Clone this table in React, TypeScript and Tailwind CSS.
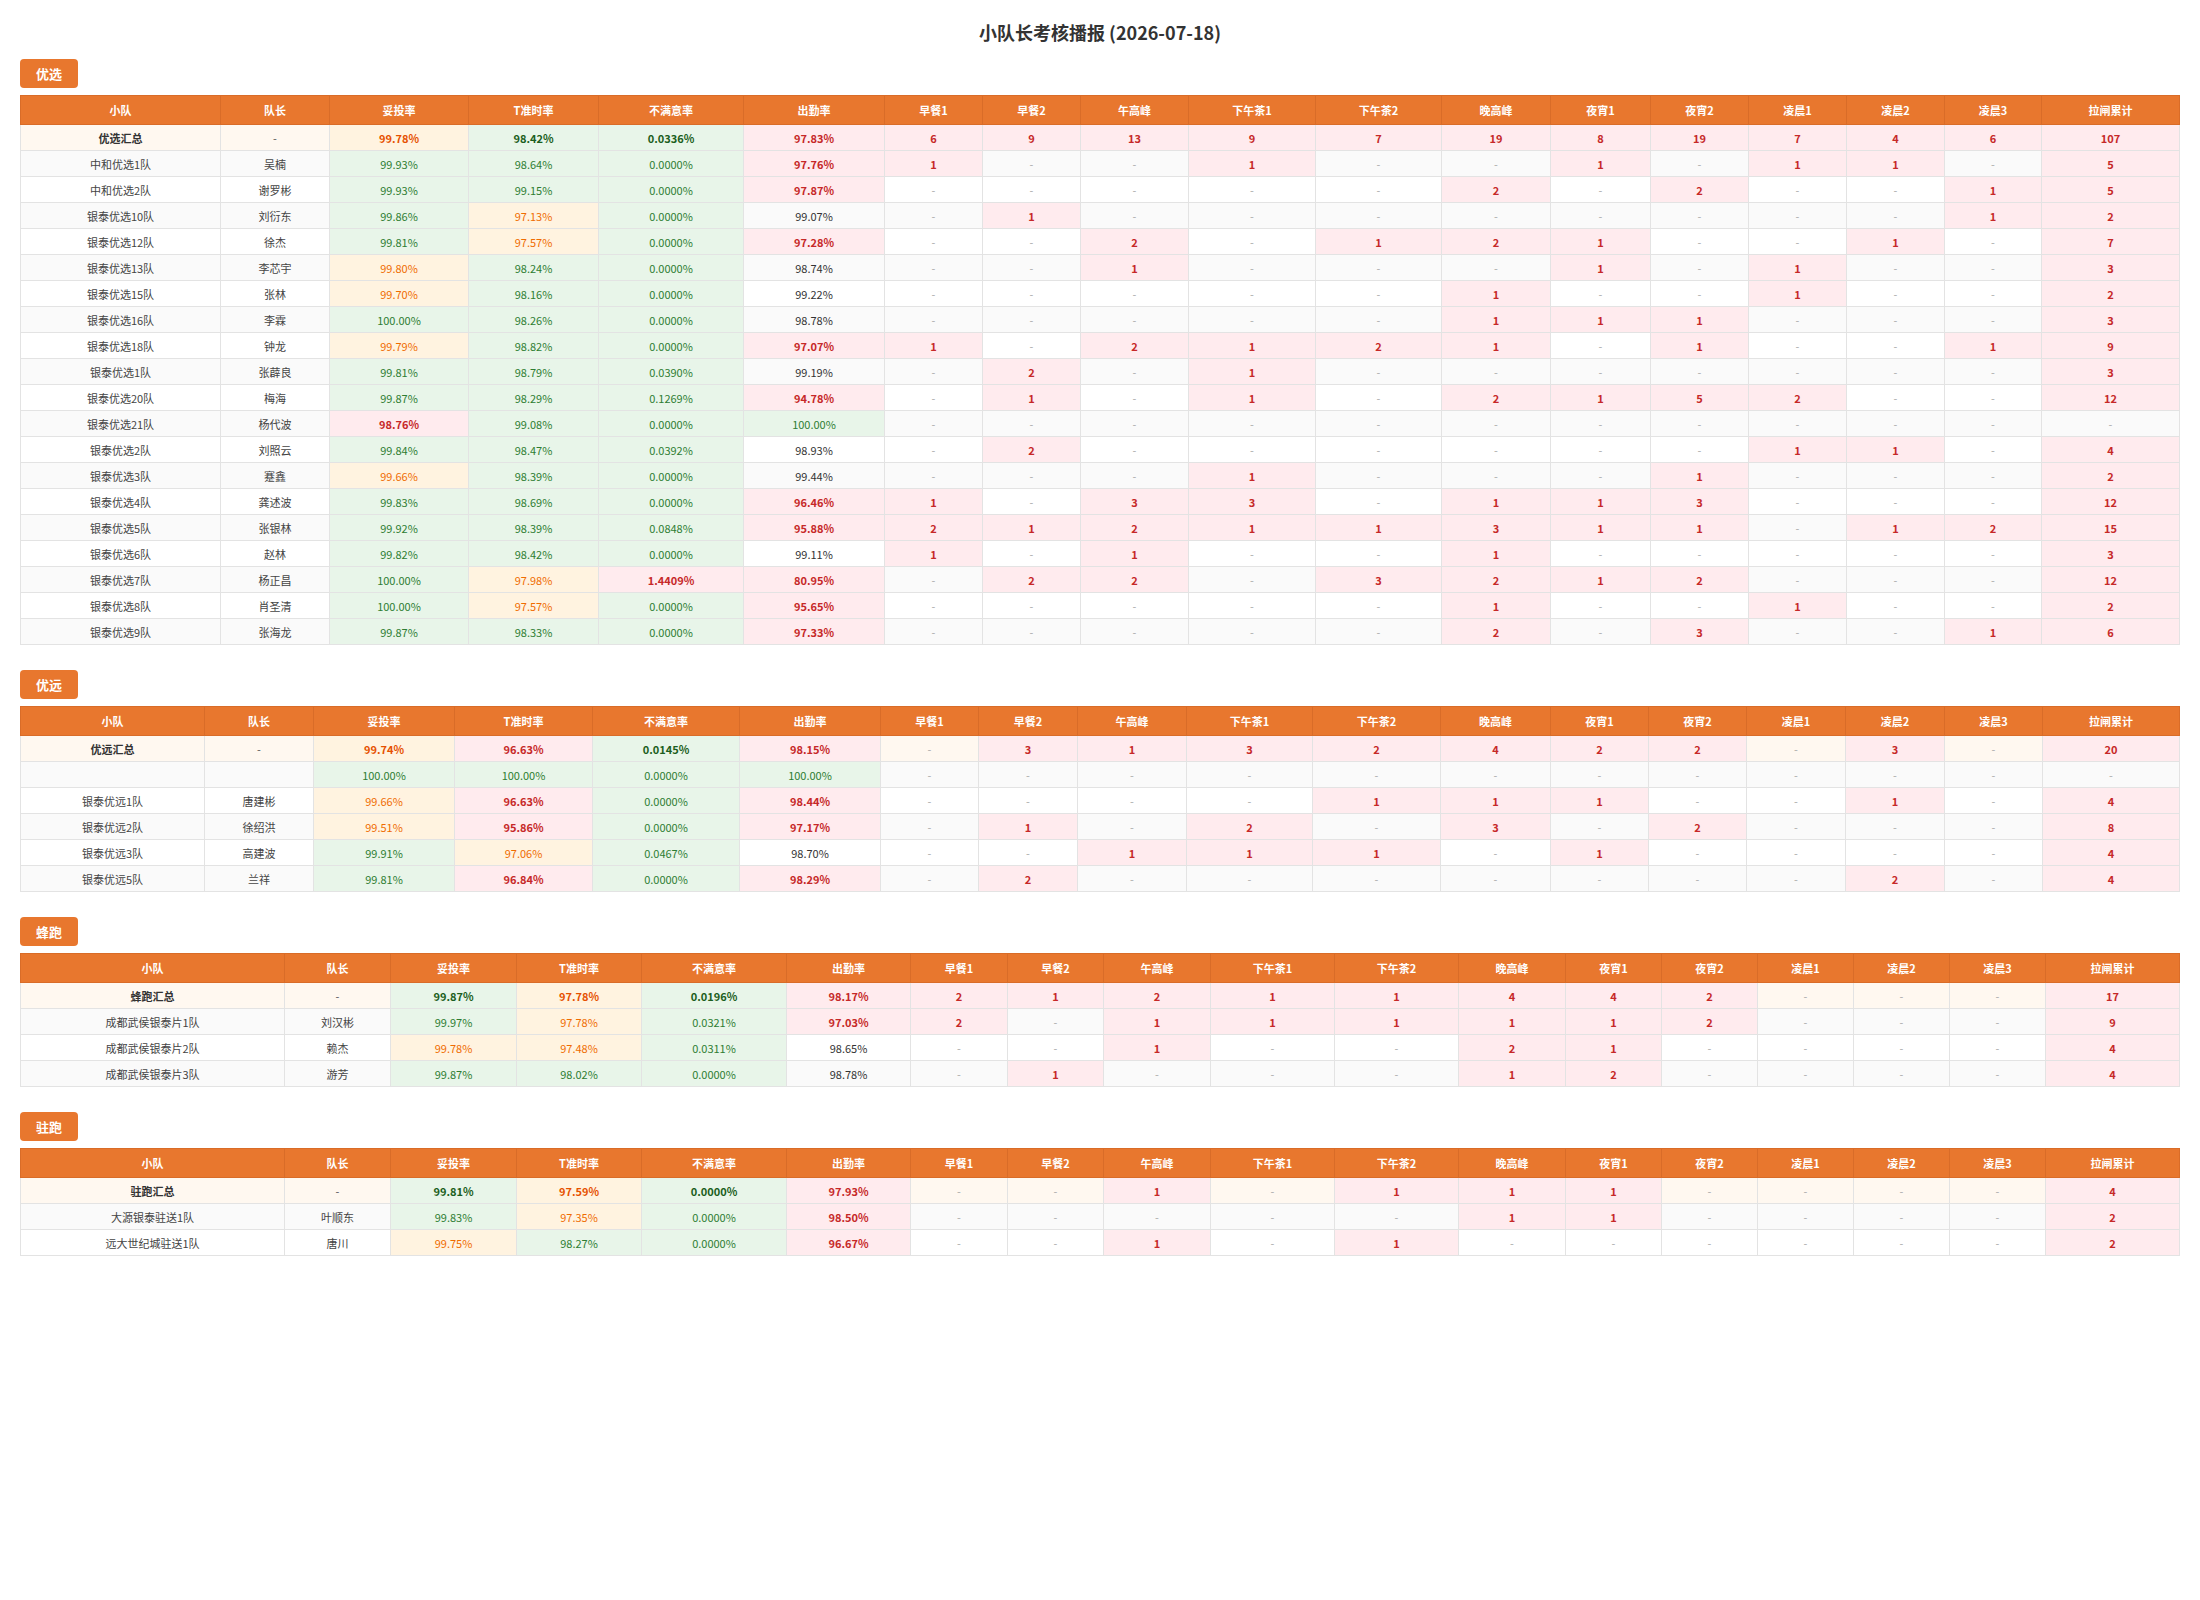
import React from "react"

type Row = [string, string, string, string, string, string, number[], number]

type Section = {
  title: string
  cols: string[]
  summary: Row
  rows: Row[]
}

const headers = [
  "小队",
  "队长",
  "妥投率",
  "T准时率",
  "不满意率",
  "出勤率",
  "早餐1",
  "早餐2",
  "午高峰",
  "下午茶1",
  "下午茶2",
  "晚高峰",
  "夜宵1",
  "夜宵2",
  "凌晨1",
  "凌晨2",
  "凌晨3",
  "拉闸累计",
]

const colsYouxuan = [
  "w-[200px]", "w-[109px]", "w-[139px]", "w-[130px]", "w-[145px]", "w-[141px]",
  "w-[98px]", "w-[98px]", "w-[108px]", "w-[127px]", "w-[126px]", "w-[109px]",
  "w-[100px]", "w-[98px]", "w-[98px]", "w-[98px]", "w-[97px]", "w-[138px]",
]

const colsYouyuan = [
  "w-[184px]", "w-[109px]", "w-[141px]", "w-[138px]", "w-[147px]", "w-[141px]",
  "w-[98px]", "w-[99px]", "w-[109px]", "w-[126px]", "w-[128px]", "w-[110px]",
  "w-[98px]", "w-[98px]", "w-[99px]", "w-[99px]", "w-[98px]", "w-[137px]",
]

const colsPao = [
  "w-[264px]", "w-[106px]", "w-[126px]", "w-[125px]", "w-[145px]", "w-[124px]",
  "w-[97px]", "w-[96px]", "w-[107px]", "w-[124px]", "w-[124px]", "w-[107px]",
  "w-[96px]", "w-[96px]", "w-[96px]", "w-[96px]", "w-[96px]", "w-[134px]",
]

const none = [0, 0, 0, 0, 0, 0, 0, 0, 0, 0, 0]

const sections: Section[] = [
  {
    title: "优选",
    cols: colsYouxuan,
    summary: ["优选汇总", "-", "99.78", "98.42", "0.0336", "97.83", [6, 9, 13, 9, 7, 19, 8, 19, 7, 4, 6], 107],
    rows: [
      ["中和优选1队", "吴楠", "99.93", "98.64", "0.0000", "97.76", [1, 0, 0, 1, 0, 0, 1, 0, 1, 1, 0], 5],
      ["中和优选2队", "谢罗彬", "99.93", "99.15", "0.0000", "97.87", [0, 0, 0, 0, 0, 2, 0, 2, 0, 0, 1], 5],
      ["银泰优选10队", "刘衍东", "99.86", "97.13", "0.0000", "99.07", [0, 1, 0, 0, 0, 0, 0, 0, 0, 0, 1], 2],
      ["银泰优选12队", "徐杰", "99.81", "97.57", "0.0000", "97.28", [0, 0, 2, 0, 1, 2, 1, 0, 0, 1, 0], 7],
      ["银泰优选13队", "李芯宇", "99.80", "98.24", "0.0000", "98.74", [0, 0, 1, 0, 0, 0, 1, 0, 1, 0, 0], 3],
      ["银泰优选15队", "张林", "99.70", "98.16", "0.0000", "99.22", [0, 0, 0, 0, 0, 1, 0, 0, 1, 0, 0], 2],
      ["银泰优选16队", "李霖", "100.00", "98.26", "0.0000", "98.78", [0, 0, 0, 0, 0, 1, 1, 1, 0, 0, 0], 3],
      ["银泰优选18队", "钟龙", "99.79", "98.82", "0.0000", "97.07", [1, 0, 2, 1, 2, 1, 0, 1, 0, 0, 1], 9],
      ["银泰优选1队", "张薜良", "99.81", "98.79", "0.0390", "99.19", [0, 2, 0, 1, 0, 0, 0, 0, 0, 0, 0], 3],
      ["银泰优选20队", "梅海", "99.87", "98.29", "0.1269", "94.78", [0, 1, 0, 1, 0, 2, 1, 5, 2, 0, 0], 12],
      ["银泰优选21队", "杨代波", "98.76", "99.08", "0.0000", "100.00", none, 0],
      ["银泰优选2队", "刘照云", "99.84", "98.47", "0.0392", "98.93", [0, 2, 0, 0, 0, 0, 0, 0, 1, 1, 0], 4],
      ["银泰优选3队", "蹇鑫", "99.66", "98.39", "0.0000", "99.44", [0, 0, 0, 1, 0, 0, 0, 1, 0, 0, 0], 2],
      ["银泰优选4队", "龚述波", "99.83", "98.69", "0.0000", "96.46", [1, 0, 3, 3, 0, 1, 1, 3, 0, 0, 0], 12],
      ["银泰优选5队", "张银林", "99.92", "98.39", "0.0848", "95.88", [2, 1, 2, 1, 1, 3, 1, 1, 0, 1, 2], 15],
      ["银泰优选6队", "赵林", "99.82", "98.42", "0.0000", "99.11", [1, 0, 1, 0, 0, 1, 0, 0, 0, 0, 0], 3],
      ["银泰优选7队", "杨正昌", "100.00", "97.98", "1.4409", "80.95", [0, 2, 2, 0, 3, 2, 1, 2, 0, 0, 0], 12],
      ["银泰优选8队", "肖圣清", "100.00", "97.57", "0.0000", "95.65", [0, 0, 0, 0, 0, 1, 0, 0, 1, 0, 0], 2],
      ["银泰优选9队", "张海龙", "99.87", "98.33", "0.0000", "97.33", [0, 0, 0, 0, 0, 2, 0, 3, 0, 0, 1], 6],
    ],
  },
  {
    title: "优远",
    cols: colsYouyuan,
    summary: ["优远汇总", "-", "99.74", "96.63", "0.0145", "98.15", [0, 3, 1, 3, 2, 4, 2, 2, 0, 3, 0], 20],
    rows: [
      ["", "", "100.00", "100.00", "0.0000", "100.00", none, 0],
      ["银泰优远1队", "唐建彬", "99.66", "96.63", "0.0000", "98.44", [0, 0, 0, 0, 1, 1, 1, 0, 0, 1, 0], 4],
      ["银泰优远2队", "徐绍洪", "99.51", "95.86", "0.0000", "97.17", [0, 1, 0, 2, 0, 3, 0, 2, 0, 0, 0], 8],
      ["银泰优远3队", "高建波", "99.91", "97.06", "0.0467", "98.70", [0, 0, 1, 1, 1, 0, 1, 0, 0, 0, 0], 4],
      ["银泰优远5队", "兰祥", "99.81", "96.84", "0.0000", "98.29", [0, 2, 0, 0, 0, 0, 0, 0, 0, 2, 0], 4],
    ],
  },
  {
    title: "蜂跑",
    cols: colsPao,
    summary: ["蜂跑汇总", "-", "99.87", "97.78", "0.0196", "98.17", [2, 1, 2, 1, 1, 4, 4, 2, 0, 0, 0], 17],
    rows: [
      ["成都武侯银泰片1队", "刘汉彬", "99.97", "97.78", "0.0321", "97.03", [2, 0, 1, 1, 1, 1, 1, 2, 0, 0, 0], 9],
      ["成都武侯银泰片2队", "赖杰", "99.78", "97.48", "0.0311", "98.65", [0, 0, 1, 0, 0, 2, 1, 0, 0, 0, 0], 4],
      ["成都武侯银泰片3队", "游芳", "99.87", "98.02", "0.0000", "98.78", [0, 1, 0, 0, 0, 1, 2, 0, 0, 0, 0], 4],
    ],
  },
  {
    title: "驻跑",
    cols: colsPao,
    summary: ["驻跑汇总", "-", "99.81", "97.59", "0.0000", "97.93", [0, 0, 1, 0, 1, 1, 1, 0, 0, 0, 0], 4],
    rows: [
      ["大源银泰驻送1队", "叶顺东", "99.83", "97.35", "0.0000", "98.50", [0, 0, 0, 0, 0, 1, 1, 0, 0, 0, 0], 2],
      ["远大世纪城驻送1队", "唐川", "99.75", "98.27", "0.0000", "96.67", [0, 0, 1, 0, 1, 0, 0, 0, 0, 0, 0], 2],
    ],
  },
]

type Tone = "g" | "o" | "r" | "n"

const deliveryTone = (v: number): Tone => (v > 99.8 ? "g" : v >= 99 ? "o" : "r")
const ontimeTone = (v: number): Tone => (v >= 98 ? "g" : v >= 97 ? "o" : "r")
const complaintTone = (v: number): Tone => (v < 1 ? "g" : "r")
const attendanceTone = (v: number): Tone => (v >= 100 ? "g" : v <= 98.5 ? "r" : "n")

const rowTone: Record<Tone, string> = {
  g: "bg-[#e8f5e9] text-[#2e7d32]",
  o: "bg-[#fff3e0] text-[#ef6c00]",
  r: "bg-[#ffebee] text-[#c62828] font-bold",
  n: "text-[#333]",
}

const sumTone: Record<Tone, string> = {
  g: "bg-[#e8f5e9] text-[#1b5e20] font-bold",
  o: "bg-[#fff3e0] text-[#e65100] font-bold",
  r: "bg-[#ffebee] text-[#c62828] font-bold",
  n: "text-[#333] font-bold",
}

const cell = "h-[26px] border border-[#e3e3e3] px-1 py-0 text-center align-middle"

function DataRow({ row, summary, striped }: { row: Row; summary?: boolean; striped?: boolean }) {
  const [name, leader, delivery, ontime, complaint, attendance, counts, total] = row
  const tones = summary ? sumTone : rowTone
  const base = summary ? "bg-[#fff8f0]" : striped ? "bg-[#fafafa]" : "bg-white"
  const rates: [string, Tone][] = [
    [delivery, deliveryTone(parseFloat(delivery))],
    [ontime, ontimeTone(parseFloat(ontime))],
    [complaint, complaintTone(parseFloat(complaint))],
    [attendance, attendanceTone(parseFloat(attendance))],
  ]

  const count = (n: number, key: string) =>
    n > 0 ? (
      <td key={key} className={`${cell} bg-[#ffebee] font-bold text-[#c62828]`}>
        {n}
      </td>
    ) : (
      <td key={key} className={`${cell} text-[#aaa]`}>
        -
      </td>
    )

  return (
    <tr className={base}>
      <td className={`${cell} ${summary ? "font-bold text-[#333]" : "text-[#444]"}`}>{name}</td>
      <td className={`${cell} ${summary ? "text-[#555]" : "text-[#444]"}`}>{leader}</td>
      {rates.map(([value, tone], i) => (
        <td key={i} className={`${cell} ${tones[tone]}`}>
          {value}%
        </td>
      ))}
      {counts.map((n, i) => count(n, `c${i}`))}
      {count(total, "total")}
    </tr>
  )
}

function ReportTable({ section }: { section: Section }) {
  return (
    <section className="flex flex-col">
      <div className="mb-[7px] flex h-[29px] w-fit items-center rounded-[4px] bg-[#e8772e] px-4 text-[13px] font-bold text-white">
        {section.title}
      </div>
      <table className="w-full table-fixed border-collapse border border-[#e3e3e3] text-[11px] leading-[14px]">
        <colgroup>
          {section.cols.map((w, i) => (
            <col key={i} className={w} />
          ))}
        </colgroup>
        <thead>
          <tr>
            {headers.map((h) => (
              <th
                key={h}
                className="h-[29px] border border-[#d96c28] bg-[#e8772e] px-1 py-0 text-center align-middle font-bold text-white"
              >
                {h}
              </th>
            ))}
          </tr>
        </thead>
        <tbody>
          <DataRow row={section.summary} summary />
          {section.rows.map((row, i) => (
            <DataRow key={i} row={row} striped={i % 2 === 0} />
          ))}
        </tbody>
      </table>
    </section>
  )
}

export default function App() {
  return (
    <div className="min-h-screen bg-white px-5 pt-5 pb-10 font-['Noto_Sans_CJK_SC','Noto_Sans',sans-serif] text-[#333]">
      <h1 className="mb-[15px] text-center text-[18px] leading-[24px] font-bold text-[#333]">
        小队长考核播报 (2026-07-18)
      </h1>
      <div className="flex flex-col gap-[25px]">
        {sections.map((s) => (
          <ReportTable key={s.title} section={s} />
        ))}
      </div>
    </div>
  )
}
